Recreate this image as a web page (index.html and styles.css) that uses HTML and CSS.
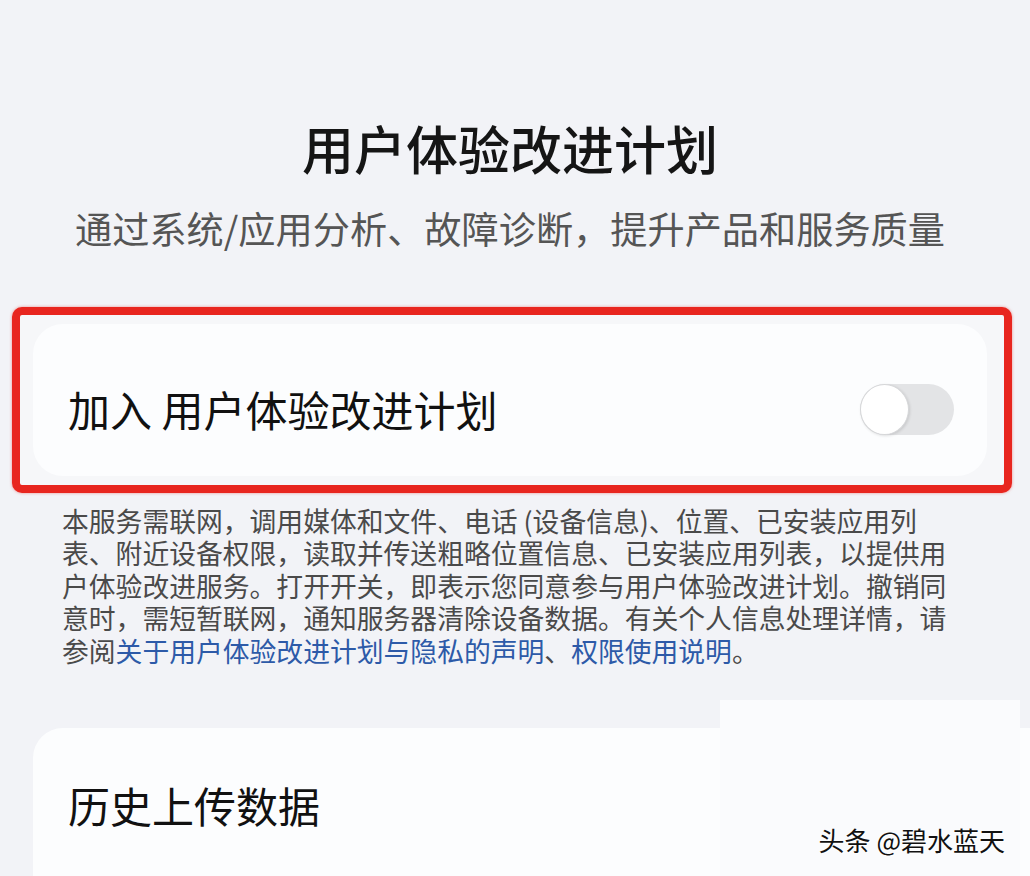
FILE: index.html
```html
<!DOCTYPE html>
<html lang="zh-CN">
<head>
    <meta charset="UTF-8">
    <meta name="viewport" content="width=device-width, initial-scale=1.0">
    <title>用户体验改进计划</title>
    <link rel="stylesheet" href="styles.css">
</head>
<body>
    <div class="page">
        <div class="header">
            <h1 class="title">用户体验改进计划</h1>
            <p class="subtitle">通过系统/应用分析、故障诊断，提升产品和服务质量</p>
        </div>

        <!-- 红框标注 -->
        <div class="highlight">
            <div class="card switch-row">
                <span class="label">加入 用户体验改进计划</span>
                <div class="switch"></div>
            </div>
        </div>

        <p class="desc">本服务需联网，调用媒体和文件、电话 (设备信息)、位置、已安装应用列<br>表、附近设备权限，读取并传送粗略位置信息、已安装应用列表，以提供用<br>户体验改进服务。打开开关，即表示您同意参与用户体验改进计划。撤销同<br>意时，需短暂联网，通知服务器清除设备数据。有关个人信息处理详情，请<br>参阅<a href="#">关于用户体验改进计划与隐私的声明</a>、<a href="#">权限使用说明</a>。</p>

        <div class="card history">
            <span class="label">历史上传数据</span>
        </div>
    </div>

    <div class="watermark"><span>头条 @碧水蓝天</span></div>
</body>
</html>
```

FILE: styles.css
```css
body {
    margin: 0;
    background-color: #f2f3f7;
    font-family: "Noto Sans CJK SC", "Noto Sans", sans-serif;
    color: #111;
    overflow: hidden;
}
.page {
    padding-top: 116px;
}
.header {
    padding-right: 10px;
    text-align: center;
}
.title {
    margin: 0;
    font-size: 52px;
    line-height: 64px;
    font-weight: 500;
    color: #151515;
}
.subtitle {
    margin: 24px 0 0;
    font-size: 37.2px;
    line-height: 48px;
    color: #555;
}
.highlight {
    margin: 55px 18px 0 12px;
    padding: 9px 17px 9px 13px;
    border: 8px solid #e8261f;
    border-radius: 10px;
    background-color: #f6f7f9;
    box-shadow: 0 0 3px rgba(232, 38, 31, 0.5);
}
.card {
    background-color: #fcfdfe;
    border-radius: 30px;
}
.switch-row {
    box-sizing: border-box;
    display: flex;
    align-items: center;
    justify-content: space-between;
    height: 152px;
    padding: 18px 33px 0 35px;
}
.label {
    font-size: 42px;
    line-height: 52px;
}
.switch {
    position: relative;
    width: 94px;
    height: 51px;
    border-radius: 26px;
    background-color: #e3e4e6;
}
.switch::after {
    content: "";
    position: absolute;
    left: 0;
    top: 0;
    width: 47px;
    height: 49px;
    border-radius: 50%;
    background-color: #fff;
    border: 1px solid #d6d7d9;
    box-shadow: 1px 1px 3px rgba(0, 0, 0, 0.12);
}
.desc {
    margin: 12px 0 0 62px;
    font-size: 26.8px;
    line-height: 32.4px;
    white-space: nowrap;
    color: #4a4a4a;
}
.desc a {
    color: #2d5aa8;
    text-decoration: none;
}
.history {
    box-sizing: border-box;
    margin: 61px 0 0 33px;
    height: 148px;
    padding: 51px 35px 0;
    border-radius: 30px 0 0 0;
}
.watermark {
    position: absolute;
    left: 720px;
    top: 700px;
    width: 300px;
    height: 176px;
    background-color: #fafbfd;
    display: flex;
    align-items: flex-end;
    justify-content: flex-end;
}
.watermark span {
    margin: 0 15px 20px 0;
    font-size: 26px;
    line-height: 32px;
    color: #111;
    text-shadow: 1px 1px 0 #fff, -1px 0 0 #fff;
}
```
